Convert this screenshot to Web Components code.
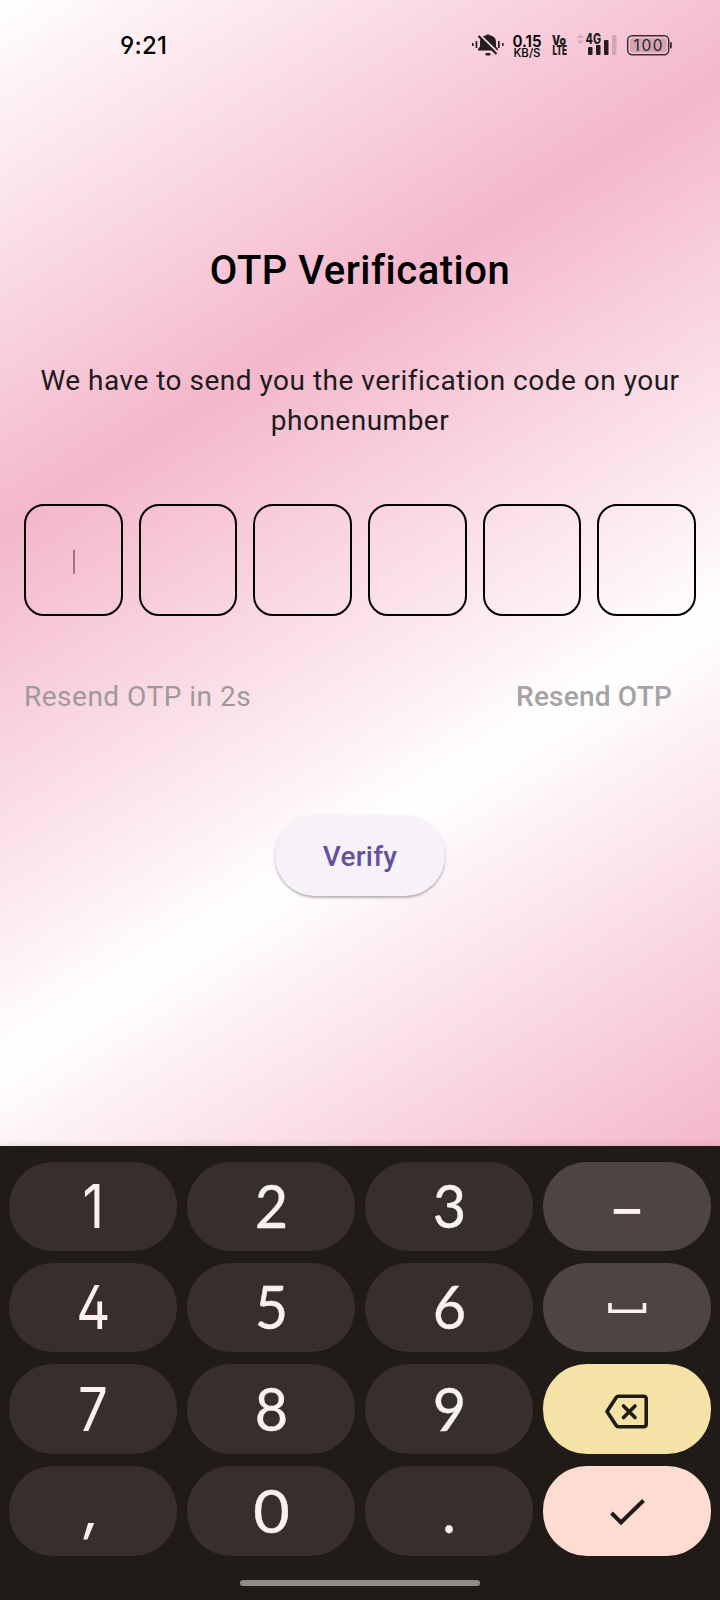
<!DOCTYPE html>
<html lang="en">
<head>
<meta charset="utf-8">
<title>OTP Verification</title>
<style>
  html, body { margin: 0; height: 100%; }
  body { font-family: Roboto, "Liberation Sans", sans-serif; overflow: hidden; }
</style>
</head>
<body>
<otp-app></otp-app>
<script>
const define = (name, html) => customElements.define(name, class extends HTMLElement {
  constructor() {
    super();
    const t = document.createElement('template');
    t.innerHTML = html;
    this.attachShadow({ mode: 'open' }).append(t.content.cloneNode(true));
  }
});

define('status-bar', `
<style>
  :host { display: flex; height: 90px; box-sizing: border-box; padding: 0 48px 0 120px; align-items: center; justify-content: space-between; color: #000; }
  .time { font: 500 24px/28px Inter, sans-serif; letter-spacing: .2px; padding-top: 2px; font-feature-settings: "ss01", "cv03", "cv04"; }
  svg { display: block; }
  text { font-family: Inter, Roboto, sans-serif; fill: #000; }
</style>
<span class="time">9:21</span>
<svg width="202" height="50" viewBox="470 20 202 50">
  <g fill="#231d20">
    <path d="M478 50.500v-1.600l2-2.400v-4.500q0-5.800 6.500-6.700v-.8h3v.8q6.500.9 6.500 6.700v4.500l2 2.400v1.600z"/>
    <rect x="485.500" y="53" width="5" height="2.500" rx="1"/>
    <rect x="472" y="43" width="1.600" height="3"/><rect x="475.600" y="41" width="1.700" height="7"/>
    <rect x="498" y="41" width="1.700" height="7"/><rect x="502" y="43" width="1.600" height="3"/>
  </g>
  <path d="M480.500 35.500l18 17.500" stroke="#f8cfdd" stroke-width="2"/>
  <path d="M478.500 36l18 18" stroke="#231d20" stroke-width="2.200"/>
  <text x="512.500" y="46.500" font-size="16" font-weight="600" textLength="29" lengthAdjust="spacingAndGlyphs">0.15</text>
  <text x="513.500" y="57" font-size="11.500" font-weight="500" textLength="27" lengthAdjust="spacingAndGlyphs">KB/S</text>
  <text x="552" y="44.500" font-size="12.500" font-weight="900" textLength="14" lengthAdjust="spacingAndGlyphs" style="fill:#231d20">Vo</text>
  <text x="552.500" y="54.500" font-size="12.500" font-weight="900" textLength="14.500" lengthAdjust="spacingAndGlyphs" style="fill:#231d20">LTE</text>
  <path d="M577 38l3.500-4 3.500 4zM577 40.500l3.500 4 3.500-4z" fill="#d3a5b6"/>
  <text x="585.500" y="44" font-size="14" font-weight="800" textLength="15.500" lengthAdjust="spacingAndGlyphs" style="fill:#231d20">4G</text>
  <g fill="#231d20"><rect x="588" y="47" width="4.500" height="8" rx="1"/><rect x="596" y="45" width="4.500" height="10" rx="1"/><rect x="604" y="40" width="4.500" height="15" rx="1"/></g>
  <rect x="612" y="35" width="4.500" height="20" rx="1" fill="#d3a5b6"/>
  <rect x="627.700" y="35.700" width="41" height="19" rx="4.500" fill="none" stroke="#3a2d33" stroke-width="1.500"/>
  <rect x="630" y="38" width="36.500" height="14.500" rx="2.500" fill="#d2a4b4"/>
  <rect x="670" y="42" width="1.800" height="6.500" rx=".8" fill="#3a2d33"/>
  <text x="633.500" y="51" font-size="15.500" font-weight="400" textLength="29" style="fill:#2e2328">100</text>
</svg>`);

define('otp-cell', `
<style>
  :host { display: flex; flex: 1; height: 112px; box-sizing: border-box; border: 2px solid #000; border-radius: 20px; align-items: center; justify-content: center; }
  i { display: none; width: 2px; height: 24px; margin: 4px 0 0 1px; background: #9c7483; }
  :host([active]) i { display: block; }
</style><i></i>`);

define('otp-button', `
<style>
  :host { display: flex; width: 170px; height: 80px; border-radius: 40px; align-items: center; justify-content: center; background: #f7f2fa; color: #65509f; font-size: 28px; font-weight: 500; letter-spacing: .2px; box-shadow: 0 2px 2px rgba(0,0,0,.22), 0 1px 4px rgba(0,0,0,.1); }
</style><slot></slot>`);

define('otp-screen', `
<style>
  :host { display: flex; flex-direction: column; align-items: center; height: 1146px; background: linear-gradient(147.860deg, #fff 0%, #f4b7cc 33.330%, #fff 66.660%, #f4b7cc 100%); }
  status-bar { align-self: stretch; }
  h1 { margin: 157px 0 0; font-size: 40px; line-height: 48px; font-weight: 500; letter-spacing: .5px; color: #000; }
  p { margin: 66px 24px 0; font-size: 28px; line-height: 40px; text-align: center; color: #1d1b20; letter-spacing: .5px; }
  .cells { display: flex; gap: 16px; align-self: stretch; margin: 63px 24px 0; }
  .resend { display: flex; justify-content: space-between; align-self: stretch; margin: 61px 48px 0 24px; font-size: 28px; line-height: 40px; color: #9f999c; letter-spacing: .5px; }
  .resend b { font-weight: 500; color: #a5a3a5; letter-spacing: .2px; }
  otp-button { margin-top: 99px; }
</style>
<status-bar></status-bar>
<h1>OTP Verification</h1>
<p>We have to send you the verification code on your<br>phonenumber</p>
<div class="cells"><otp-cell active></otp-cell><otp-cell></otp-cell><otp-cell></otp-cell><otp-cell></otp-cell><otp-cell></otp-cell><otp-cell></otp-cell></div>
<div class="resend"><span>Resend OTP in 2s</span><b>Resend OTP</b></div>
<otp-button>Verify</otp-button>`);

define('pad-key', `
<style>
  :host { display: flex; align-items: center; justify-content: center; overflow: hidden; border-radius: 44px; background: #382e2d; color: #fdf0ed; font: 400 60px/89px Inter, sans-serif; font-feature-settings: "ss01", "cv03", "cv04"; }
  :host([round]) { font-family: Lato, sans-serif; -webkit-text-stroke: .4px #fdf0ed; }
  :host([tone="mid"]) { background: #4e4543; }
  :host([tone="yellow"]) { background: #f5e2a7; color: #211b18; }
  :host([tone="peach"]) { background: #ffdcd1; color: #211b18; }
  span { display: block; transform: translateY(var(--dy, 0px)) scaleX(var(--sx, .88)) skewX(var(--skew, 0deg)); }
</style><span><slot></slot></span>`);

define('number-pad', `
<style>
  :host { display: block; height: 454px; box-sizing: border-box; padding: 16px 9px 0; background: #211b18; box-shadow: 0 -1px 7px rgba(0,0,0,.1); position: relative; }
  .grid { display: grid; grid-template-columns: repeat(4, 1fr); grid-template-rows: 89px 89px 90px 90px; gap: 12px 10px; }
  .home { width: 240px; height: 6px; border-radius: 3px; background: #918b8b; margin: 24px auto 0; }
  svg { display: block; fill: none; stroke: currentColor; }
  .svg { --sx: 1; }
  [round] { --sx: .96; --dy: -1px; }
  .zero { --sx: 1.05; }
  .dash { --dy: 2px; }
  .comma { --sx: 1; --skew: -8deg; --dy: -4px; }
</style>
<div class="grid">
  <pad-key>1</pad-key><pad-key round>2</pad-key><pad-key round>3</pad-key><pad-key tone="mid" class="dash">–</pad-key>
  <pad-key>4</pad-key><pad-key round>5</pad-key><pad-key round>6</pad-key>
  <pad-key tone="mid" class="svg"><svg width="168" height="89" stroke-width="3.600"><path d="M67 40v8.200h34.500V40"/></svg></pad-key>
  <pad-key>7</pad-key><pad-key round>8</pad-key><pad-key round>9</pad-key>
  <pad-key tone="yellow" class="svg"><svg width="168" height="89" stroke-width="3.600" stroke-linejoin="round" stroke-linecap="round"><path d="M75.500 31.300H100.500Q103.200 31.300 103.200 34V59Q103.200 61.700 100.500 61.700H75.500Q74 61.700 73.200 60.500L64 46.500l9.200-14Q74 31.300 75.500 31.300zM80.500 41l11.500 11.500M92 41L80.500 52.500"/></svg></pad-key>
  <pad-key class="comma">,</pad-key><pad-key round class="zero">0</pad-key><pad-key round>.</pad-key>
  <pad-key tone="peach" class="svg"><svg width="168" height="89" stroke-width="4"><path d="M68.500 46l9.500 9.500 22.500-22"/></svg></pad-key>
</div>
<div class="home"></div>`);

define('otp-app', `
<style>:host { display: block; width: 720px; height: 1600px; }</style>
<otp-screen></otp-screen><number-pad></number-pad>`);
</script>
</body>
</html>
